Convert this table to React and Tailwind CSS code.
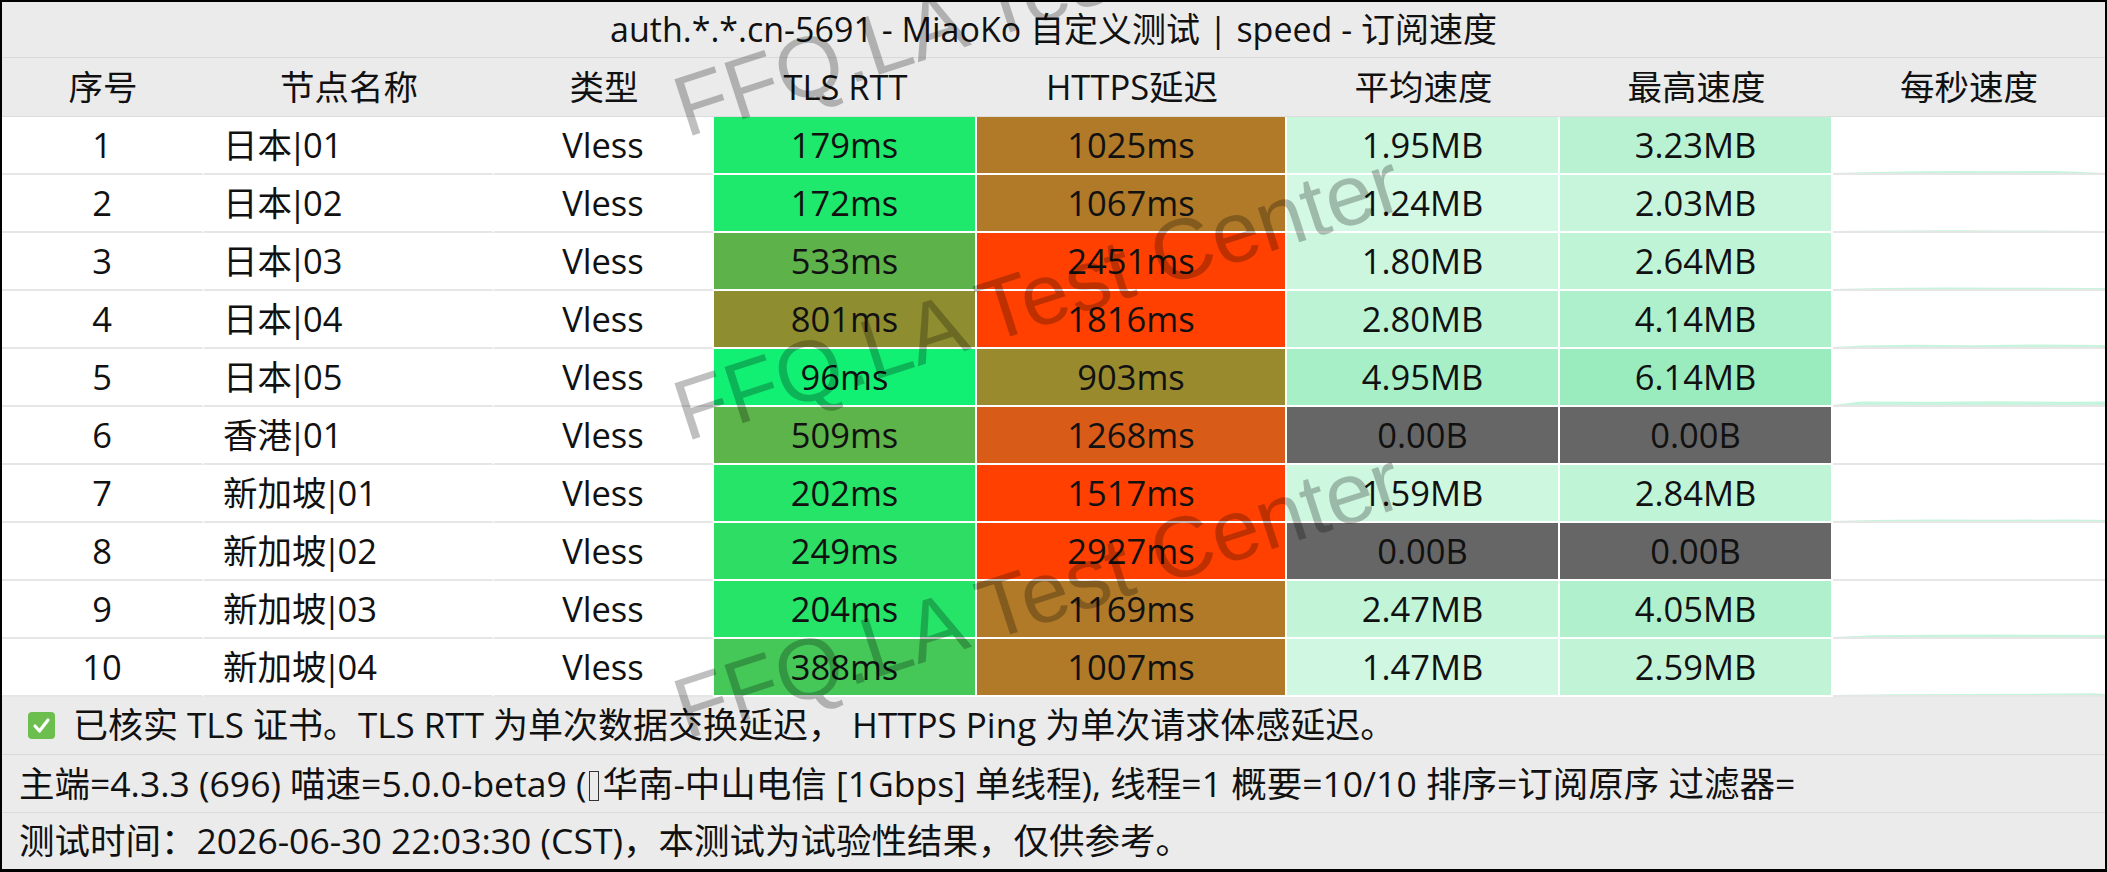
import React from "react";

const rows = [
  { n: 1, name: "日本|01", tls: "179ms", tlsBg: "bg-[#1ee96c]", https: "1025ms", httpsBg: "bg-[#b07a28]", avg: "1.95MB", avgBg: "bg-[#c9f6dd]", max: "3.23MB", maxBg: "bg-[#b9f2d3]", spark: "0,6 40,5 70,4.5 120,4 170,4.2 220,4 250,5 272,6" },
  { n: 2, name: "日本|02", tls: "172ms", tlsBg: "bg-[#1ee96c]", https: "1067ms", httpsBg: "bg-[#b07a28]", avg: "1.24MB", avgBg: "bg-[#d3f8e4]", max: "2.03MB", maxBg: "bg-[#c6f5db]", spark: "0,6 60,5.6 120,5.2 180,5.5 272,6" },
  { n: 3, name: "日本|03", tls: "533ms", tlsBg: "bg-[#5db24a]", https: "2451ms", httpsBg: "bg-[#ff4000]", avg: "1.80MB", avgBg: "bg-[#ccf6de]", max: "2.64MB", maxBg: "bg-[#c0f4d7]", spark: "0,6 50,5 110,4.6 190,4.8 272,5" },
  { n: 4, name: "日本|04", tls: "801ms", tlsBg: "bg-[#8e8e30]", https: "1816ms", httpsBg: "bg-[#ff4000]", avg: "2.80MB", avgBg: "bg-[#bdf3d5]", max: "4.14MB", maxBg: "bg-[#aef0cb]", spark: "0,6 30,4.5 80,3.8 140,4.2 200,3.6 272,4" },
  { n: 5, name: "日本|05", tls: "96ms", tlsBg: "bg-[#12f074]", https: "903ms", httpsBg: "bg-[#9a8a2e]", avg: "4.95MB", avgBg: "bg-[#a6efc7]", max: "6.14MB", maxBg: "bg-[#9aecbf]", spark: "0,6 28,2.5 100,2.8 160,2.2 230,2.8 272,2.5" },
  { n: 6, name: "香港|01", tls: "509ms", tlsBg: "bg-[#5cb44a]", https: "1268ms", httpsBg: "bg-[#d85c18]", avg: "0.00B", avgBg: "bg-[#666666]", max: "0.00B", maxBg: "bg-[#666666]", spark: "" },
  { n: 7, name: "新加坡|01", tls: "202ms", tlsBg: "bg-[#25e468]", https: "1517ms", httpsBg: "bg-[#ff4000]", avg: "1.59MB", avgBg: "bg-[#cef7e0]", max: "2.84MB", maxBg: "bg-[#bff4d6]", spark: "0,6 40,5 100,4.6 170,4.8 240,4.4 272,5" },
  { n: 8, name: "新加坡|02", tls: "249ms", tlsBg: "bg-[#2ede64]", https: "2927ms", httpsBg: "bg-[#ff4000]", avg: "0.00B", avgBg: "bg-[#666666]", max: "0.00B", maxBg: "bg-[#666666]", spark: "" },
  { n: 9, name: "新加坡|03", tls: "204ms", tlsBg: "bg-[#25e468]", https: "1169ms", httpsBg: "bg-[#b07a28]", avg: "2.47MB", avgBg: "bg-[#c2f4d8]", max: "4.05MB", maxBg: "bg-[#b0f0cc]", spark: "0,6 40,4.2 100,3.8 160,3.4 220,3.8 272,4" },
  { n: 10, name: "新加坡|04", tls: "388ms", tlsBg: "bg-[#45c858]", https: "1007ms", httpsBg: "bg-[#b07a28]", avg: "1.47MB", avgBg: "bg-[#d0f7e1]", max: "2.59MB", maxBg: "bg-[#c1f4d7]", spark: "0,6 60,5.2 130,5 200,4.8 260,4.2 272,5" },
];

const headers = ["序号", "节点名称", "类型", "TLS RTT", "HTTPS延迟", "平均速度", "最高速度", "每秒速度"];

const gridCols = "grid grid-cols-[202px_290px_220px_263px_310px_273px_273px_272px]";

function WhiteCell({ children, className = "" }) {
  return (
    <div className={`h-[58px] border-r-2 border-r-white border-b-2 border-b-[#e6e6e6] bg-white flex items-center ${className}`}>
      {children}
    </div>
  );
}

function ColorCell({ children, bg }) {
  return (
    <div className={`h-[58px] border-r-2 border-b-2 border-white flex items-center justify-center ${bg}`}>
      {children}
    </div>
  );
}

function Check() {
  return (
    <svg width="27" height="27" viewBox="0 0 27 27" className="shrink-0">
      <rect x="0" y="0" width="27" height="27" rx="4" fill="#6cbf4e" />
      <path d="M7 14 L11.5 19 L20 8" stroke="white" strokeWidth="3.2" fill="none" strokeLinecap="round" strokeLinejoin="round" />
    </svg>
  );
}

function Name({ text }) {
  const [a, b] = text.split("|");
  return (
    <span>
      {a}
      <span className="-mx-[4px]">|</span>
      {b}
    </span>
  );
}

const wm = "pointer-events-none absolute left-[688px] origin-bottom-left -rotate-[18deg] whitespace-nowrap text-[86px] leading-none text-black/25 font-['Liberation_Sans',sans-serif]";

export default function App() {
  return (
    <div className="w-[2107px] h-[872px] bg-black pt-[2px] px-[2px] pb-[3px] font-['Open_Sans','Noto_Sans_CJK_SC',sans-serif] text-[#111]">
      <div className="relative w-full h-full bg-white overflow-hidden flex flex-col">
        {/* title */}
        <div className="h-[56px] shrink-0 bg-[#ebebeb] border-b border-[#d9d9d9] flex items-center justify-center text-[34px]">
          auth.*.*.cn-5691 - MiaoKo 自定义测试 | speed - 订阅速度
        </div>
        {/* header */}
        <div className={`${gridCols} h-[59px] shrink-0 bg-[#ebebeb] border-b border-[#dcdcdc] text-[34.5px]`}>
          {headers.map((h) => (
            <div key={h} className="flex items-center justify-center">{h}</div>
          ))}
        </div>
        {/* rows */}
        <div className="flex flex-col text-[34.5px]">
          {rows.map((r) => (
            <div key={r.n} className={gridCols}>
              <WhiteCell className="justify-center">{r.n}</WhiteCell>
              <WhiteCell className="pl-[19px]"><Name text={r.name} /></WhiteCell>
              <WhiteCell className="justify-center">Vless</WhiteCell>
              <ColorCell bg={r.tlsBg}>{r.tls}</ColorCell>
              <ColorCell bg={r.httpsBg}>{r.https}</ColorCell>
              <ColorCell bg={r.avgBg}>{r.avg}</ColorCell>
              <ColorCell bg={r.maxBg}>{r.max}</ColorCell>
              <div className="h-[58px] border-b-2 border-b-[#e6e6e6] bg-white flex items-end">
                {r.spark ? (
                  <svg width="272" height="6" viewBox="0 0 272 6" preserveAspectRatio="none" className="block">
                    <polygon points={`${r.spark} 272,6 0,6`} fill="#bdf2d6" opacity="0.85" />
                  </svg>
                ) : null}
              </div>
            </div>
          ))}
        </div>
        {/* footer */}
        <div className="h-[58px] shrink-0 bg-[#ebebeb] border-b border-[#dadada] flex items-center gap-[18px] pl-[26px] text-[35px]">
          <Check />
          <span>已核实 TLS 证书。TLS RTT 为单次数据交换延迟， HTTPS Ping 为单次请求体感延迟。</span>
        </div>
        <div className="h-[58px] shrink-0 bg-[#ebebeb] border-b border-[#dadada] flex items-center pl-[17px] text-[35.5px]">
          <span>
            主端=4.3.3 (696) 喵速=5.0.0-beta9 (
            <span className="inline-block w-[10px] h-[30px] border border-[#333] align-[-4px] mx-[3px]"></span>
            华南-中山电信 [1Gbps] 单线程), 线程=1 概要=10/10 排序=订阅原序 过滤器=
          </span>
        </div>
        <div className="flex-1 bg-[#ebebeb] flex items-center pl-[17px] text-[35.5px]">
          测试时间：2026-06-30 22:03:30 (CST)，本测试为试验性结果，仅供参考。
        </div>

        {/* watermarks */}
        <div className={`${wm} top-[62px]`}>FFQ.LA Test Center</div>
        <div className={`${wm} top-[366px]`}>FFQ.LA Test Center</div>
        <div className={`${wm} top-[664px]`}>FFQ.LA Test Center</div>
      </div>
    </div>
  );
}
